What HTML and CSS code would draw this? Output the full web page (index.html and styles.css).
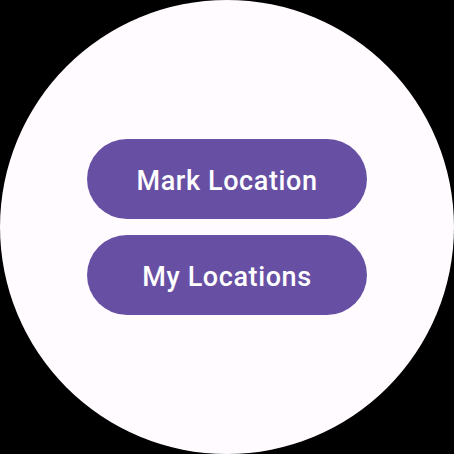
FILE: index.html
```html
<!DOCTYPE html>
<html>
<head>
<meta charset="utf-8">
<link rel="stylesheet" href="styles.css">
</head>
<body>
<div class="screen">
  <div class="stack">
    <button class="pill">Mark Location</button>
    <button class="pill">My Locations</button>
  </div>
</div>
</body>
</html>
```
FILE: styles.css
```css
html, body {
  margin: 0;
  padding: 0;
  background: #000;
  width: 454px;
  height: 454px;
  overflow: hidden;
}
.screen {
  width: 454px;
  height: 454px;
  border-radius: 50%;
  background: #fffbfe;
  display: flex;
  align-items: center;
  justify-content: center;
}
.stack {
  display: flex;
  flex-direction: column;
  gap: 16px;
}
.pill {
  width: 280px;
  height: 80px;
  border: none;
  border-radius: 40px;
  background: #6750a4;
  color: #fff;
  font-family: Roboto, "Noto Sans", sans-serif;
  font-weight: 500;
  font-size: 27px;
  letter-spacing: 0.6px;
  padding: 4px 0 0 0;
  margin: 0;
}
```
